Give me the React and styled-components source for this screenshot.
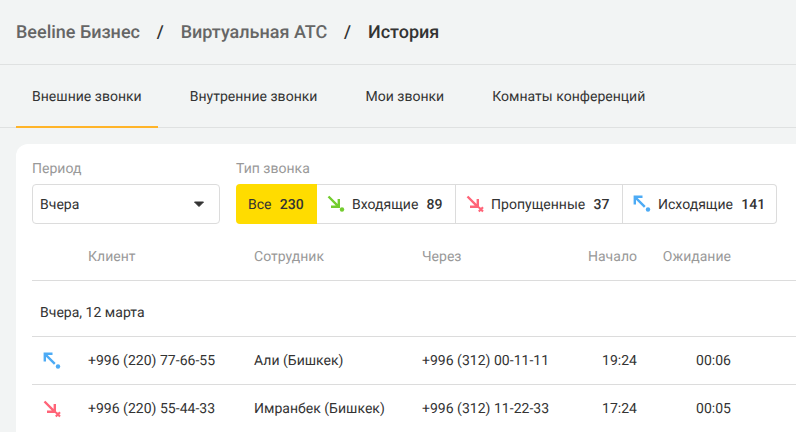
import styled, { createGlobalStyle } from 'styled-components';

const GlobalStyle = createGlobalStyle`
	html, body {
		margin: 0;
		padding: 0;
		height: 100%;
		overflow: hidden;
		background-color: #f2f4f4;
		font-family: Roboto, 'Liberation Sans', sans-serif;
		text-rendering: geometricPrecision;
	}
`;

const Page = styled.div`
	width: 796px;
	height: 432px;
	overflow: hidden;
	background-color: #f2f4f4;
	color: #333;
	letter-spacing: 0.02px;
`;

const Header = styled.div`
	display: flex;
	align-items: center;
	height: 64px;
	padding: 0 16px;
	border-bottom: 1px solid #dfe1e1;
	font-size: 18px;
	font-weight: 500;
	letter-spacing: 0;
`;

const Crumb = styled.span`
	color: ${({ $current }) => ($current ? '#333' : '#666')};
`;

const Slash = styled.span`
	margin: 0 17px 0 16.7px;
	color: #333;
`;

const Tabs = styled.div`
	display: flex;
	height: 62px;
	border-bottom: 1px solid #dfe1e1;
	margin: 0 0 16px;
	padding-left: 16px;
`;

const Tab = styled.div`
	display: flex;
	align-items: center;
	box-sizing: content-box;
	height: 59px;
	padding: 2px 16px 0;
	margin-right: 16px;
	margin-bottom: -1px;
	font-size: 14px;
	color: #333;
	border-bottom: 2px solid ${({ $active }) => ($active ? '#ffb429' : 'transparent')};
`;

const Card = styled.div`
	margin-left: 16px;
	height: 288px;
	padding-left: 16px;
	background-color: #fff;
	border-radius: 12px 0 0 0;
`;

const Filters = styled.div`
	display: flex;
	gap: 16px;
	padding-top: 17px;
`;

const Field = styled.div`
	display: flex;
	flex-direction: column;
	gap: 7px;
`;

const Label = styled.div`
	height: 16px;
	line-height: 16px;
	font-size: 14px;
	color: #999;
`;

const Select = styled.div`
	display: flex;
	align-items: center;
	justify-content: space-between;
	box-sizing: border-box;
	width: 188px;
	height: 40px;
	padding: 1px 14px 0 7px;
	border: 1px solid #dcdcdc;
	border-radius: 4px;
	font-size: 14px;
`;

const Segments = styled.div`
	display: flex;
	height: 40px;
`;

const Segment = styled.div`
	display: flex;
	align-items: center;
	box-sizing: border-box;
	width: ${({ $width }) => $width}px;
	height: 40px;
	padding: ${({ $active }) => ($active ? '1px 0 0 12px' : '1px 0 0 10px')};
	font-size: 14px;
	background-color: ${({ $active }) => ($active ? '#ffdc00' : '#fff')};
	border: ${({ $active }) => ($active ? 'none' : '1px solid #dcdcdc')};
	border-left: none;
	border-radius: ${({ $active, $last }) => ($active ? '4px 0 0 4px' : $last ? '0 4px 4px 0' : '0')};
`;

const SegIcon = styled.span`
	display: flex;
	margin: -1px 7px 0 0;
`;

const Count = styled.span`
	margin-left: 8.2px;
	font-weight: 500;
`;

const Row = styled.div`
	display: grid;
	grid-template-columns: 56px 166px 168px 119px 96px 94px;
	align-items: center;
	box-sizing: border-box;
	height: 48px;
	border-bottom: 1px solid #dcdcdc;
	font-size: 14px;
	color: #333;
	white-space: nowrap;
`;

const HeadRow = styled(Row)`
	height: 49px;
	margin-top: 8px;
	padding-top: 1px;
	color: #999;
`;

const RightCell = styled.div`
	text-align: right;
`;

const GroupRow = styled.div`
	display: flex;
	align-items: center;
	box-sizing: border-box;
	height: 56px;
	padding: 8px 0 0 8px;
	border-bottom: 1px solid #dcdcdc;
	font-size: 14px;
	color: #333;
`;

const IconCell = styled.div`
	display: flex;
	padding-left: 11px;
`;

const InIcon = () => (
	<svg width="18" height="18" viewBox="0 0 18 18" fill="none">
		<path d="M1.5 1.5 L11.8 11.8 M11.8 4 V11.8 H4" stroke="#73cc2e" strokeWidth="2.4" />
		<circle cx="15" cy="14.5" r="2.2" fill="#73cc2e" />
	</svg>
);

const MissedIcon = () => (
	<svg width="18" height="18" viewBox="0 0 18 18" fill="none">
		<path d="M1.5 1.5 L11.8 11.8 M11.8 4 V11.8 H4" stroke="#ff6478" strokeWidth="2.4" />
		<path d="M12.8 12.3 L17 16.5 M17 12.3 L12.8 16.5" stroke="#ff6478" strokeWidth="2.1" />
	</svg>
);

const OutIcon = () => (
	<svg width="18" height="18" viewBox="0 0 18 18" fill="none">
		<path d="M11.8 11.8 L1.8 1.8 M1.8 9.5 V1.8 H9.5" stroke="#4dabf5" strokeWidth="2.4" />
		<circle cx="15" cy="14.5" r="2.2" fill="#4dabf5" />
	</svg>
);

const CaretIcon = () => (
	<svg width="12" height="7" viewBox="0 0 12 7">
		<path d="M1.5 1 H10.5 L6 5.5 Z" fill="#333" stroke="#333" strokeWidth="1" strokeLinejoin="round" />
	</svg>
);

const calls = [
	{ id: 1, icon: <OutIcon />, client: '+996 (220) 77-66-55', staff: 'Али (Бишкек)', via: '+996 (312) 00-11-11', start: '19:24', wait: '00:06' },
	{ id: 2, icon: <MissedIcon />, client: '+996 (220) 55-44-33', staff: 'Имранбек (Бишкек)', via: '+996 (312) 11-22-33', start: '17:24', wait: '00:05' },
];

const App = () => {
	return (
		<Page>
			<GlobalStyle />
			<Header>
				<Crumb>Beeline Бизнес</Crumb>
				<Slash>/</Slash>
				<Crumb>Виртуальная АТС</Crumb>
				<Slash>/</Slash>
				<Crumb $current>История</Crumb>
			</Header>
			<Tabs>
				<Tab $active>Внешние звонки</Tab>
				<Tab>Внутренние звонки</Tab>
				<Tab>Мои звонки</Tab>
				<Tab>Комнаты конференций</Tab>
			</Tabs>
			<Card>
				<Filters>
					<Field>
						<Label>Период</Label>
						<Select>
							Вчера
							<CaretIcon />
						</Select>
					</Field>
					<Field>
						<Label>Тип звонка</Label>
						<Segments>
							<Segment $active $width={81}>
								Все<Count>230</Count>
							</Segment>
							<Segment $width={139}>
								<SegIcon><InIcon /></SegIcon>
								Входящие<Count>89</Count>
							</Segment>
							<Segment $width={167}>
								<SegIcon><MissedIcon /></SegIcon>
								Пропущенные<Count>37</Count>
							</Segment>
							<Segment $last $width={154}>
								<SegIcon><OutIcon /></SegIcon>
								Исходящие<Count>141</Count>
							</Segment>
						</Segments>
					</Field>
				</Filters>
				<HeadRow>
					<div />
					<div>Клиент</div>
					<div>Сотрудник</div>
					<div>Через</div>
					<RightCell>Начало</RightCell>
					<RightCell>Ожидание</RightCell>
				</HeadRow>
				<GroupRow>Вчера, 12 марта</GroupRow>
				{calls.map((call) => (
					<Row key={call.id}>
						<IconCell>{call.icon}</IconCell>
						<div>{call.client}</div>
						<div>{call.staff}</div>
						<div>{call.via}</div>
						<RightCell>{call.start}</RightCell>
						<RightCell>{call.wait}</RightCell>
					</Row>
				))}
			</Card>
		</Page>
	);
};

export default App;
